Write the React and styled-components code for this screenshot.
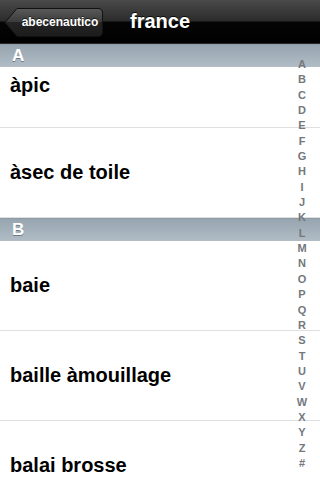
import React from 'react'
import styled, { createGlobalStyle } from 'styled-components'

const GlobalStyle = createGlobalStyle`
  html, body {
    margin: 0;
    padding: 0;
    background: #ffffff;
    font-family: 'Liberation Sans', Arial, sans-serif;
  }
`

const sections = [
  {
    letter: 'A',
    rows: [
      { label: 'àpic', height: 61, top: 7 },
      { label: 'àsec de toile', height: 90 },
    ],
  },
  {
    letter: 'B',
    rows: [
      { label: 'baie', height: 90 },
      { label: 'baille àmouillage', height: 90 },
      { label: 'balai brosse', height: 90 },
    ],
  },
]

const index = 'ABCDEFGHIJKLMNOPQRSTUVWXYZ#'.split('')

function BackButton({ children }) {
  return (
    <Back>
      <svg width="100" height="31" viewBox="0 0 100 31">
        <defs>
          <linearGradient id="bk" x1="0" y1="0" x2="0" y2="1">
            <stop offset="0" stopColor="#5a5a5a" />
            <stop offset="0.5" stopColor="#3a3a3a" />
            <stop offset="0.5" stopColor="#242424" />
            <stop offset="1" stopColor="#1c1c1c" />
          </linearGradient>
        </defs>
        <path
          d="M1 15.5 L13 1.5 H94 Q98.5 1.5 98.5 6 V25 Q98.5 29.5 94 29.5 H13 Z"
          fill="url(#bk)"
          stroke="#111"
          strokeWidth="1"
        />
      </svg>
      <BackLabel>{children}</BackLabel>
    </Back>
  )
}

export default function App() {
  return (
    <>
      <GlobalStyle />
      <Screen>
        <NavBar>
          <BackButton>abecenautico</BackButton>
          <Title>france</Title>
        </NavBar>
        <List>
          {sections.map((s) => (
            <Section key={s.letter}>
              <SectionHeader>{s.letter}</SectionHeader>
              {s.rows.map((r) => (
                <Row key={r.label} $height={r.height} $top={r.top}>
                  {r.label}
                </Row>
              ))}
            </Section>
          ))}
          <IndexBar>
            {index.map((l) => (
              <IndexLetter key={l}>{l}</IndexLetter>
            ))}
          </IndexBar>
        </List>
      </Screen>
    </>
  )
}

const Screen = styled.div`
  width: 320px;
  height: 480px;
  overflow: hidden;
  display: flex;
  flex-direction: column;
  background: #fff;
`

const NavBar = styled.div`
  position: relative;
  height: 44px;
  flex: none;
  display: flex;
  align-items: center;
  padding-left: 4px;
  box-sizing: border-box;
  background: linear-gradient(
    to bottom,
    #4a4a4a 0%,
    #2c2c2c 48%,
    #050505 52%,
    #000 100%
  );
  border-bottom: 1px solid #2a2a2a;
`

const Back = styled.div`
  position: relative;
  width: 100px;
  height: 31px;
  margin-top: 1px;
`

const BackLabel = styled.span`
  position: absolute;
  left: 15px;
  right: 3px;
  top: 0;
  bottom: 0;
  display: flex;
  align-items: center;
  justify-content: center;
  color: #fff;
  font-weight: bold;
  font-size: 12px;
  text-shadow: 0 -1px 0 rgba(0, 0, 0, 0.6);
`

const Title = styled.div`
  position: absolute;
  left: 0;
  right: 0;
  top: 0;
  bottom: 0;
  display: flex;
  align-items: center;
  justify-content: center;
  color: #fff;
  font-weight: bold;
  font-size: 20px;
  text-shadow: 0 -1px 0 rgba(0, 0, 0, 0.8);
  pointer-events: none;
`

const List = styled.div`
  position: relative;
  flex: 1;
  overflow: hidden;
`

const Section = styled.div`
  display: flex;
  flex-direction: column;
`

const SectionHeader = styled.div`
  height: 22px;
  flex: none;
  display: flex;
  align-items: center;
  padding-left: 12px;
  border-top: 1px solid #8e9ba5;
  background: linear-gradient(to bottom, #97a5b0 0%, #b1bcc5 100%);
  color: #fff;
  font-weight: bold;
  font-size: 17px;
  text-shadow: 0 1px 0 rgba(70, 80, 90, 0.6);
`

const Row = styled.div`
  height: ${(p) => p.$height}px;
  flex: none;
  display: flex;
  align-items: ${(p) => (p.$top != null ? 'flex-start' : 'center')};
  padding-top: ${(p) => (p.$top != null ? p.$top : 0)}px;
  padding-left: 10px;
  box-sizing: border-box;
  border-bottom: 1px solid #e0e0e0;
  color: #000;
  font-weight: bold;
  font-size: 20px;
`

const IndexBar = styled.div`
  position: absolute;
  right: 10px;
  top: 13px;
  width: 16px;
  display: flex;
  flex-direction: column;
  align-items: center;
`

const IndexLetter = styled.div`
  height: 15.35px;
  line-height: 15px;
  font-size: 11px;
  font-weight: bold;
  color: #74787d;
  text-align: center;
`
